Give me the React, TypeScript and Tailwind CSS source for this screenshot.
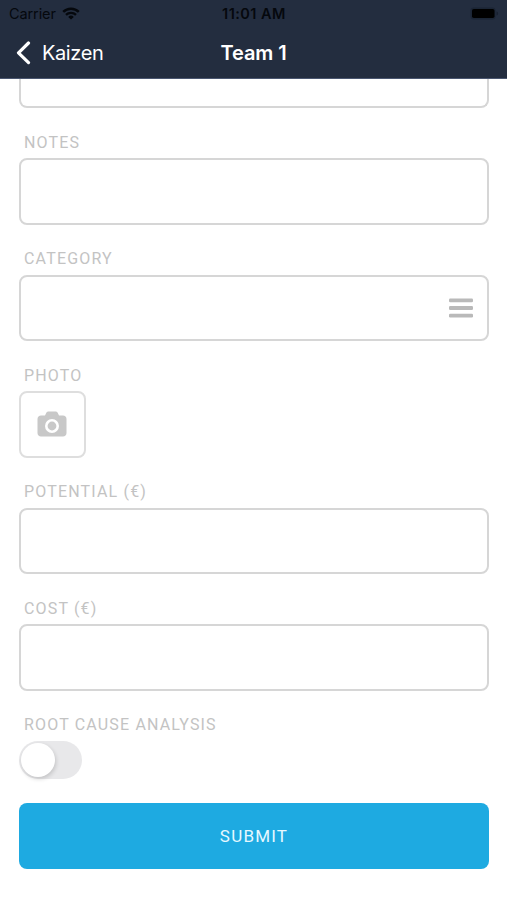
import { ReactNode, useState } from 'react'

interface IField {
  label: string
  children: ReactNode
}

const inputClass =
  'block h-[66.5px] w-full rounded-lg border-2 border-[#d6d6d6] bg-white px-4 text-base text-gray-700 outline-none'

const IconWifi = () => (
  <svg viewBox="0 0 18 13" className="h-[13px] w-[18px]" fill="none">
    <path d="M1.2 4.9a11.2 11.2 0 0 1 15.6 0" stroke="#05080d" strokeWidth="2.5" />
    <path d="M4 7.9a7.1 7.1 0 0 1 10 0" stroke="#05080d" strokeWidth="2.3" />
    <path d="M9 12.6 6.2 9.9a4 4 0 0 1 5.6 0z" fill="#05080d" />
  </svg>
)

const IconBattery = () => (
  <svg viewBox="0 0 29 13" className="h-[13px] w-[29px]">
    <rect x="0.5" y="0.5" width="25" height="12" rx="3" fill="#1b2535" />
    <rect x="2" y="2" width="22.5" height="9" rx="1.8" fill="#000" />
    <path d="M26.5 4.5v4c1-.3 1.6-1 1.6-2s-.6-1.7-1.6-2z" fill="#182130" />
  </svg>
)

const IconBack = () => (
  <svg viewBox="0 0 15 24" className="h-6 w-[15px]" fill="none">
    <path
      d="M12.5 2l-10 9.8 10 9.8"
      stroke="#fff"
      strokeWidth="3.2"
      strokeLinecap="round"
      strokeLinejoin="round"
    />
  </svg>
)

const IconMenu = () => (
  <svg viewBox="0 0 24 20" className="h-5 w-6" fill="#b9b9b9">
    <rect y="0.5" width="24" height="3.8" rx="1.2" />
    <rect y="8.1" width="24" height="3.8" rx="1.2" />
    <rect y="15.7" width="24" height="3.8" rx="1.2" />
  </svg>
)

const IconCamera = () => (
  <svg viewBox="0 0 30 26" className="mb-0.5 h-[26px] w-[30px]">
    <path
      d="M4 4.5h4l1.2-2.5C9.7 1 10.4.5 11.5.5h7c1.1 0 1.8.5 2.3 1.5L22 4.5h4c2 0 3.500 1.400 3.500 3.500v14c0 2.100-1.500 3.500-3.500 3.500H4C2 25.500.5 24.100.5 22V8c0-2.100 1.500-3.500 3.500-3.500z"
      fill="#c8c8c8"
    />
    <circle cx="15" cy="15" r="5.7" fill="#c8c8c8" stroke="#fff" strokeWidth="2.6" />
  </svg>
)

const Field = ({ label, children }: IField) => (
  <div className="pt-[24.4px]">
    <p className="mb-[5.6px] pl-[5px] text-base leading-5 tracking-[1.17px] text-[#c3c3c3]">
      {label}
    </p>
    {children}
  </div>
)

const App = () => {
  const [isRootCause, setIsRootCause] = useState(false)

  return (
    <div className="h-[900px] w-full overflow-hidden bg-white font-['Roboto',sans-serif]">
      <header className="h-[79px] border-b border-[#4a5670] bg-[#232d3f] font-['Inter',sans-serif]">
        <div className="grid h-[27px] grid-cols-3 items-center pl-[9px] pr-[8px] text-[#05080d]">
          <div className="flex items-center gap-1.5">
            <span className="text-[14.5px] tracking-[-0.1px]">Carrier</span>
            <IconWifi />
          </div>
          <span className="text-center text-[14.5px] font-semibold tracking-[0.45px]">
            11:01 AM
          </span>
          <div className="flex justify-end">
            <IconBattery />
          </div>
        </div>
        <div className="grid h-[51px] grid-cols-3 items-center px-4 text-white">
          <button type="button" className="flex items-center gap-[11px]">
            <IconBack />
            <span className="text-[20px] tracking-[-0.4px]">Kaizen</span>
          </button>
          <h1 className="text-center text-[20px] font-semibold tracking-[-0.1px]">
            Team 1
          </h1>
        </div>
      </header>

      <main className="pl-[19px] pr-[18px]">
        <div className="h-[29.4px] rounded-b-lg border-2 border-t-0 border-[#d6d6d6]" />
        <Field label="NOTES">
          <input type="text" className={inputClass} />
        </Field>
        <Field label="CATEGORY">
          <button
            type="button"
            className="flex h-[66.5px] w-full items-center justify-end rounded-lg border-2 border-[#d6d6d6] pr-3.5"
          >
            <IconMenu />
          </button>
        </Field>
        <Field label="PHOTO">
          <button
            type="button"
            className="flex size-[66.5px] items-center justify-center rounded-lg border-2 border-[#dedede]"
          >
            <IconCamera />
          </button>
        </Field>
        <Field label="POTENTIAL (€)">
          <input type="text" className={inputClass} />
        </Field>
        <Field label="COST (€)">
          <input type="text" className={inputClass} />
        </Field>
        <Field label="ROOT CAUSE ANALYSIS">
          <button
            type="button"
            role="switch"
            aria-checked={isRootCause}
            onClick={() => setIsRootCause(!isRootCause)}
            className={`flex h-[38px] w-[63px] items-center rounded-full px-0.5 ${
              isRootCause ? 'justify-end bg-[#1eaae1]' : 'bg-[#e8e8ea]'
            }`}
          >
            <span className="size-[34px] rounded-full bg-white shadow-[1px_2px_4px_rgba(0,0,0,0.16)]" />
          </button>
        </Field>
        <button
          type="submit"
          className="mt-[24.7px] h-[66px] w-full rounded-lg bg-[#1eaae1] text-[17px] tracking-[1.2px] text-[#e6f8ff]"
        >
          SUBMIT
        </button>
      </main>
    </div>
  )
}

export default App
